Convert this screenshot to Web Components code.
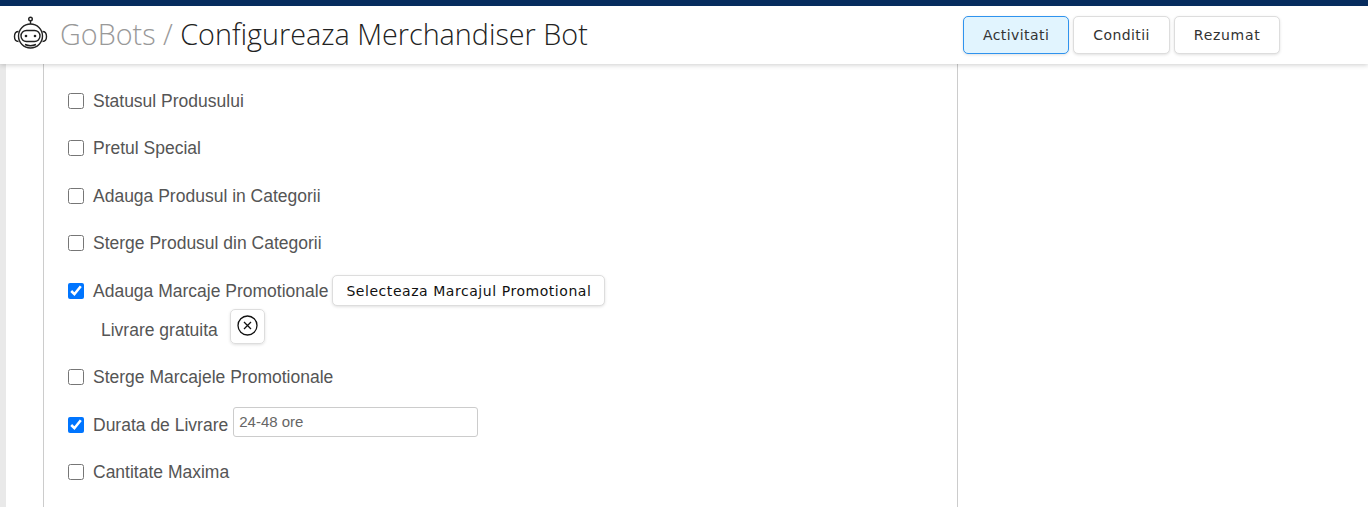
<!DOCTYPE html>
<html>
<head>
<meta charset="utf-8">
<title>GoBots</title>
<style>
    html, body { margin: 0; height: 507px; overflow: hidden; background: #fff; }
    body { font-family: "Liberation Sans", Arial, sans-serif; }
</style>
</head>
<body>
<app-page>
    <app-header slot="header">
        <nav-button active>Activitati</nav-button>
        <nav-button>Conditii</nav-button>
        <nav-button>Rezumat</nav-button>
    </app-header>
    <activity-option>Statusul Produsului</activity-option>
    <activity-option>Pretul Special</activity-option>
    <activity-option>Adauga Produsul in Categorii</activity-option>
    <activity-option>Sterge Produsul din Categorii</activity-option>
    <activity-option checked>
        Adauga Marcaje Promotionale
        <action-button slot="control">Selecteaza Marcajul Promotional</action-button>
        <selected-tag slot="extra">Livrare gratuita</selected-tag>
    </activity-option>
    <activity-option>Sterge Marcajele Promotionale</activity-option>
    <activity-option checked>
        Durata de Livrare
        <text-field slot="control" value="24-48 ore"></text-field>
    </activity-option>
    <activity-option>Cantitate Maxima</activity-option>
</app-page>

<script>
class AppPage extends HTMLElement {
    constructor() {
        super();
        this.attachShadow({ mode: 'open' });
        this.shadowRoot.innerHTML = `
            <style>
                :host { display: block; height: 507px; overflow: hidden; background: #fff; }
                .body { display: flex; height: 443px; }
                .strip { width: 6px; background: #e9e9e9; }
                .gutter { width: 37px; }
                .panel {
                    width: 889px;
                    border-left: 1px solid #ccc;
                    border-right: 1px solid #ccc;
                    padding: 13.5px 0 0 24px;
                    box-sizing: content-box;
                }
            </style>
            <slot name="header"></slot>
            <div class="body">
                <div class="strip"></div>
                <div class="gutter"></div>
                <div class="panel"><slot></slot></div>
            </div>
        `;
    }
}

class AppHeader extends HTMLElement {
    constructor() {
        super();
        this.attachShadow({ mode: 'open' });
        this.shadowRoot.innerHTML = `
            <style>
                :host {
                    display: flex;
                    align-items: center;
                    height: 58px;
                    border-top: 6px solid #062c5e;
                    background: #fff;
                    box-shadow: 0 1px 5px rgba(0, 0, 0, .2);
                    position: relative;
                    z-index: 2;
                    padding-left: 13px;
                    box-sizing: content-box;
                }
                svg { width: 35px; height: 35px; flex: none; margin-top: -3px; }
                h1 {
                    margin: -4px 0 0 12px;
                    width: 903px;
                    font: 300 28.75px "Open Sans", sans-serif;
                    color: #222;
                    white-space: nowrap;
                }
                h1 span { color: #999; }
                nav { display: flex; gap: 4px; }
                ::slotted(:last-child) { letter-spacing: .7px; }
            </style>
            <svg viewBox="0 0 35 35" fill="none" stroke="#222" stroke-width="1.4">
                <circle cx="17.5" cy="3" r="1.8"/>
                <path d="M17.5 5v3"/>
                <circle cx="17.5" cy="20" r="12"/>
                <path d="M5.5 15.5C3 15.5 1.5 17.5 1.5 20.5s1.5 5 4 5M29.5 15.5c2.5 0 4 2 4 5s-1.5 5-4 5"/>
                <rect x="8" y="14.5" width="19" height="11" rx="5.5"/>
                <path d="M12 28.5c3.5 1.5 7.5 1.5 11 0"/>
                <circle cx="13" cy="20" r="1.3" fill="#222" stroke="none"/>
                <circle cx="22" cy="20" r="1.3" fill="#222" stroke="none"/>
            </svg>
            <h1><span>GoBots /</span> Configureaza Merchandiser Bot</h1>
            <nav><slot></slot></nav>
        `;
    }
}

class NavButton extends HTMLElement {
    constructor() {
        super();
        this.attachShadow({ mode: 'open' });
        this.shadowRoot.innerHTML = `
            <style>
                :host {
                    display: block;
                    height: 38px;
                    padding: 0 19px;
                    box-sizing: border-box;
                    border: 1px solid #ddd;
                    border-radius: 5px;
                    background: #fff;
                    box-shadow: 0 1px 3px rgba(0, 0, 0, .12);
                    font: 400 14px/36px "DejaVu Sans", sans-serif;
                    letter-spacing: .42px;
                    color: #333;
                }
                :host([active]) { background: #e1f4fe; border-color: #2f93ee; }
            </style>
            <slot></slot>
        `;
    }
}

class ActivityOption extends HTMLElement {
    constructor() {
        super();
        this.attachShadow({ mode: 'open' });
        const checked = this.hasAttribute('checked') ? 'checked' : '';
        this.shadowRoot.innerHTML = `
            <style>
                :host { display: block; padding: 8.75px 0; color: #555; font: 17.5px "Liberation Sans", sans-serif; }
                .row { display: flex; align-items: center; min-height: 30px; }
                input { width: 16px; height: 16px; margin: 0 9px 1px 0; flex: none; accent-color: #0075ff; }
                label { white-space: nowrap; }
                .control { margin-left: 4px; display: flex; }
            </style>
            <div class="row">
                <input type="checkbox" ${checked}>
                <label><slot></slot></label>
                <div class="control"><slot name="control"></slot></div>
            </div>
            <slot name="extra"></slot>
        `;
    }
}

class ActionButton extends HTMLElement {
    constructor() {
        super();
        this.attachShadow({ mode: 'open' });
        this.shadowRoot.innerHTML = `
            <style>
                :host {
                    display: block;
                    height: 31px;
                    margin: -1px 0 1px;
                    padding: 0 13px;
                    box-sizing: border-box;
                    border: 1px solid #ddd;
                    border-radius: 5px;
                    background: #fff;
                    box-shadow: 0 1px 3px rgba(0, 0, 0, .12);
                    font: 400 14px/31px "DejaVu Sans", sans-serif;
                    letter-spacing: .55px;
                    color: #111;
                    white-space: nowrap;
                }
            </style>
            <slot></slot>
        `;
    }
}

class SelectedTag extends HTMLElement {
    constructor() {
        super();
        this.attachShadow({ mode: 'open' });
        this.shadowRoot.innerHTML = `
            <style>
                :host { display: flex; align-items: center; padding-left: 33px; height: 35px; margin: 2px 0 1px; }
                .label { padding-top: 8px; }
                .remove {
                    width: 35px;
                    height: 35px;
                    box-sizing: border-box;
                    margin-left: 12px;
                    border: 1px solid #ddd;
                    border-radius: 5px;
                    box-shadow: 0 1px 3px rgba(0, 0, 0, .12);
                    display: flex;
                    align-items: center;
                    justify-content: center;
                }
                svg { width: 21px; height: 21px; margin-top: -2px; }
            </style>
            <span class="label"><slot></slot></span>
            <div class="remove">
                <svg viewBox="0 0 21 21" fill="none" stroke="#111" stroke-width="1.3">
                    <circle cx="10.5" cy="10.5" r="9.5"/>
                    <path d="M7 7l7 7M14 7l-7 7"/>
                </svg>
            </div>
        `;
    }
}

class TextField extends HTMLElement {
    constructor() {
        super();
        this.attachShadow({ mode: 'open' });
        this.shadowRoot.innerHTML = `
            <style>
                :host { display: block; margin: -3px 0 3px 1px; }
                input {
                    display: block;
                    width: 245px;
                    height: 30px;
                    box-sizing: border-box;
                    padding: 0 6px 2px 5px;
                    border: 1px solid #ccc;
                    border-radius: 3px;
                    font: 15px "Liberation Sans", sans-serif;
                    color: #666;
                    outline: none;
                }
            </style>
            <input type="text" value="${this.getAttribute('value') || ''}">
        `;
    }
}

customElements.define('app-page', AppPage);
customElements.define('app-header', AppHeader);
customElements.define('nav-button', NavButton);
customElements.define('activity-option', ActivityOption);
customElements.define('action-button', ActionButton);
customElements.define('selected-tag', SelectedTag);
customElements.define('text-field', TextField);
</script>
</body>
</html>
